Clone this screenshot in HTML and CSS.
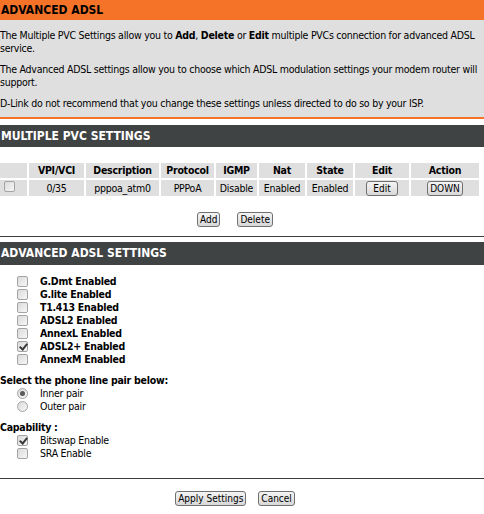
FILE: index.html
```html
<!DOCTYPE html>
<html lang="en">
<head>
<meta charset="utf-8">
<title>Advanced ADSL</title>
<link rel="stylesheet" href="styles.css">
</head>
<body>
<div class="page">

  <section class="intro-box">
    <h1 class="title-orange">ADVANCED ADSL</h1>
    <div class="intro">
      <p>The Multiple PVC Settings allow you to <b>Add</b>, <b>Delete</b> or <b>Edit</b> multiple PVCs connection for advanced ADSL service.</p>
      <p>The Advanced ADSL settings allow you to choose which ADSL modulation settings your modem router will support.</p>
      <p>D-Link do not recommend that you change these settings unless directed to do so by your ISP.</p>
    </div>
  </section>

  <section class="box">
    <h2 class="title-dark">MULTIPLE PVC SETTINGS</h2>
    <table class="pvc">
      <thead>
        <tr>
          <th class="c-sel"></th>
          <th class="c-vpi">VPI/VCI</th>
          <th class="c-desc">Description</th>
          <th class="c-proto">Protocol</th>
          <th class="c-igmp">IGMP</th>
          <th class="c-nat">Nat</th>
          <th class="c-state">State</th>
          <th class="c-edit">Edit</th>
          <th class="c-action">Action</th>
        </tr>
      </thead>
      <tbody>
        <tr>
          <td class="sel-cell"><input type="checkbox" class="chk"></td>
          <td>0/35</td>
          <td>pppoa_atm0</td>
          <td>PPPoA</td>
          <td>Disable</td>
          <td>Enabled</td>
          <td>Enabled</td>
          <td><button class="btn btn-edit" type="button">Edit</button></td>
          <td><button class="btn" type="button">DOWN</button></td>
        </tr>
      </tbody>
    </table>
    <div class="actions actions-pvc">
      <button class="btn" type="button">Add</button>
      <button class="btn" type="button">Delete</button>
    </div>
  </section>

  <section class="box">
    <h2 class="title-dark">ADVANCED ADSL SETTINGS</h2>
    <div class="opt-list opt-modes">
      <label class="opt"><input type="checkbox" class="chk"><span>G.Dmt Enabled</span></label>
      <label class="opt"><input type="checkbox" class="chk"><span>G.lite Enabled</span></label>
      <label class="opt"><input type="checkbox" class="chk"><span>T1.413 Enabled</span></label>
      <label class="opt"><input type="checkbox" class="chk"><span>ADSL2 Enabled</span></label>
      <label class="opt"><input type="checkbox" class="chk"><span>AnnexL Enabled</span></label>
      <label class="opt"><input type="checkbox" class="chk" checked><span>ADSL2+ Enabled</span></label>
      <label class="opt"><input type="checkbox" class="chk"><span>AnnexM Enabled</span></label>
    </div>

    <div class="group-label">Select the phone line pair below:</div>
    <div class="opt-list">
      <label class="opt"><input type="radio" name="pair" class="rad" checked><span>Inner pair</span></label>
      <label class="opt"><input type="radio" name="pair" class="rad"><span>Outer pair</span></label>
    </div>

    <div class="group-label">Capability :</div>
    <div class="opt-list">
      <label class="opt"><input type="checkbox" class="chk" checked><span>Bitswap Enable</span></label>
      <label class="opt"><input type="checkbox" class="chk"><span>SRA Enable</span></label>
    </div>
  </section>

  <div class="actions actions-main">
    <button class="btn" type="button">Apply Settings</button>
    <button class="btn" type="button">Cancel</button>
  </div>

</div>
</body>
</html>
```

FILE: styles.css
```css
* {
  box-sizing: border-box;
}

body {
  margin: 0;
  background: #ffffff;
  color: #000000;
  font-family: "DejaVu Sans Condensed", "DejaVu Sans", sans-serif;
  font-stretch: condensed;
  font-size: 10.5px;
  letter-spacing: -0.25px;
  line-height: 13px;
}

.page {
  width: 484px;
  overflow: hidden;
}

/* ---------- intro panel ---------- */
.intro-box {
  border-bottom: 2px solid #f47328;
}

.title-orange {
  margin: 0;
  height: 20px;
  padding-left: 1px;
  background: #f47328;
  color: #000000;
  font-size: 12px;
  font-weight: bold;
  letter-spacing: 0;
  line-height: 20px;
}

.intro {
  background: #dfdfdf;
  padding: 9px 0 7px;
}

.intro p {
  margin: 0 0 8px;
}

.intro p:last-child {
  margin-bottom: 0;
}

/* ---------- sections ---------- */
.box {
  margin-top: 6px;
  border-bottom: 1px solid #3c3c3c;
}

.box + .box {
  margin-top: 5px;
}

.title-dark {
  margin: 0;
  height: 22px;
  padding-left: 1px;
  background: #404343;
  color: #ffffff;
  font-size: 12px;
  font-weight: bold;
  letter-spacing: 0;
  line-height: 22px;
}

.box + .box .title-dark {
  height: 23px;
  line-height: 23px;
}

/* ---------- PVC table ---------- */
.pvc {
  table-layout: fixed;
  width: 483px;
  margin: 14px 0 0 -2px;
  border-spacing: 2px;
}

.pvc th,
.pvc td {
  padding: 0;
  background: #dfdfdf;
  text-align: center;
  white-space: nowrap;
}

.pvc th {
  height: 15px;
  font-weight: bold;
}

.pvc td {
  height: 16px;
}

.c-sel { width: 27px; }
.c-vpi { width: 55px; }
.c-desc { width: 73px; }
.c-proto { width: 53px; }
.c-igmp { width: 41px; }
.c-nat { width: 46px; }
.c-state { width: 46px; }
.c-edit { width: 54px; }
.c-action { width: 68px; }

.pvc .sel-cell {
  text-align: left;
  padding-left: 4px;
}

/* ---------- buttons ---------- */
.btn {
  height: 15px;
  margin: 0;
  padding: 0 2px;
  border: 1px solid #707070;
  border-radius: 3px;
  background: linear-gradient(#f4f4f4, #e6e6e6 50%, #d8d8d8);
  color: #000000;
  font-family: "DejaVu Sans Condensed", "DejaVu Sans", sans-serif;
  font-stretch: condensed;
  font-size: 10px;
  letter-spacing: 0;
  line-height: 13px;
  vertical-align: middle;
}

.btn-edit {
  padding: 0 6px;
}

.actions {
  display: flex;
  justify-content: center;
}

.actions-pvc {
  gap: 17px;
  padding: 14px 14px 9px 0;
}

.actions-main {
  gap: 12px;
  padding: 12px 14px 0 0;
}

/* ---------- option lists ---------- */
.opt-list {
  display: flex;
  flex-direction: column;
}

.opt-modes {
  margin-top: 10px;
  font-weight: bold;
}

.opt {
  display: flex;
  align-items: center;
  height: 13px;
  padding-left: 17px;
}

.opt span {
  margin-left: 12px;
}

.group-label {
  margin-top: 8px;
  font-weight: bold;
}

.box:last-of-type {
  padding-bottom: 18px;
}

/* ---------- checkbox / radio ---------- */
.chk,
.rad {
  -webkit-appearance: none;
  appearance: none;
  flex: none;
  width: 11px;
  height: 11px;
  margin: 0;
  border: 1px solid #a4a4a4;
  background: linear-gradient(135deg, #dadada, #f7f7f7);
  position: relative;
}

.chk {
  border-radius: 2px;
}

.chk:checked::after {
  content: "";
  position: absolute;
  left: 3px;
  top: 0;
  width: 3px;
  height: 6px;
  border: solid #3a3a3a;
  border-width: 0 2px 2px 0;
  transform: rotate(40deg);
}

.rad {
  border-radius: 50%;
}

.rad:checked::after {
  content: "";
  position: absolute;
  left: 2px;
  top: 2px;
  width: 5px;
  height: 5px;
  border-radius: 50%;
  background: #5a5a5a;
}
```
